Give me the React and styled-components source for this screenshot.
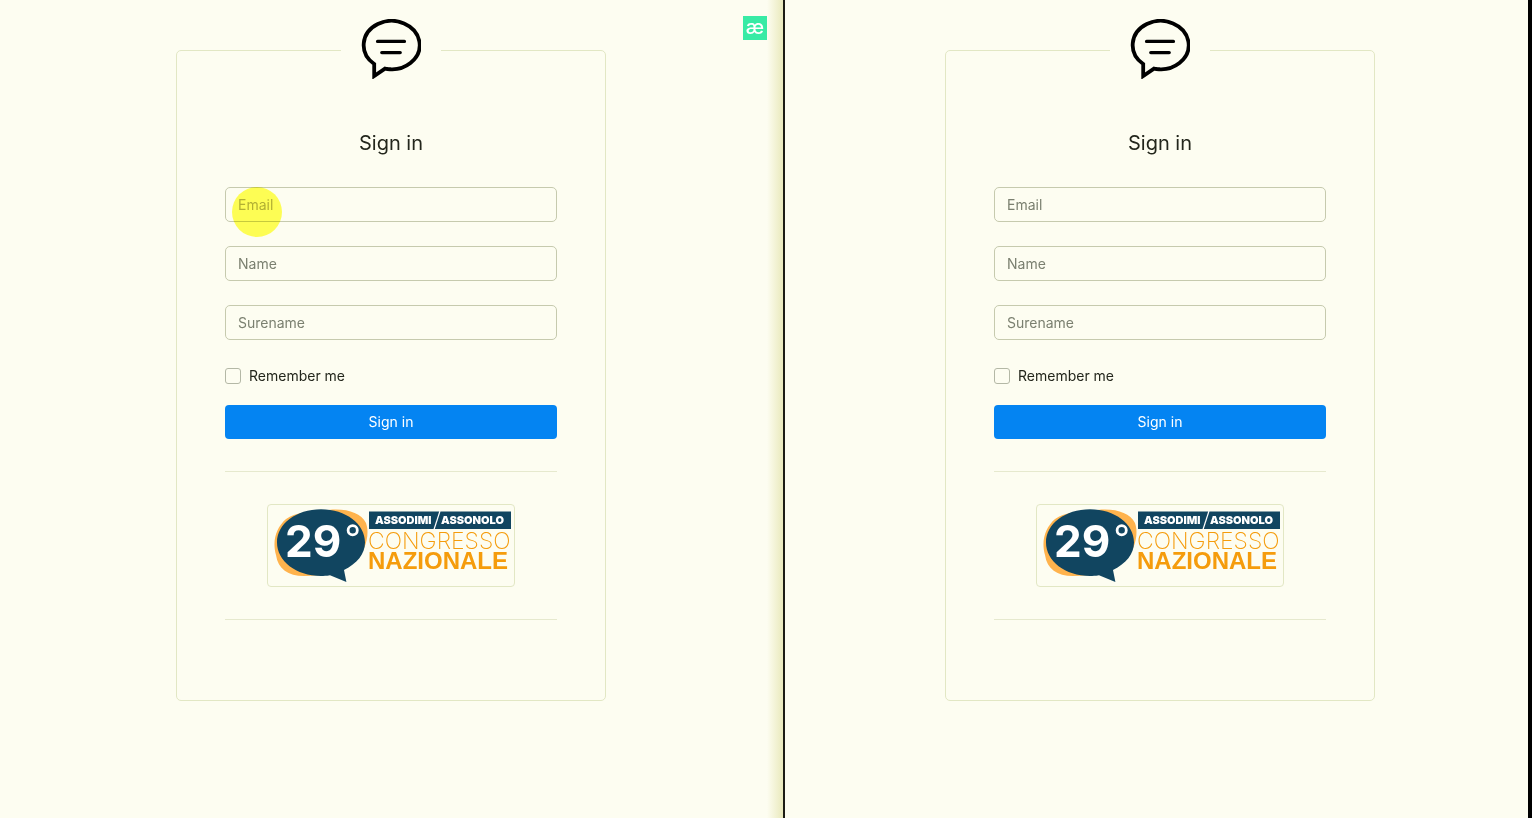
import React, { useId } from "react";
import styled, { createGlobalStyle } from "styled-components";

const colors = {
  page: "#fdfdf1",
  text: "#23261c",
  muted: "#7b8070",
  faded: "#b2b090",
  card: "#e2e7c4",
  field: "#c6caae",
  primary: "#0484f2",
  navy: "#114560",
  orange: "#f59c0c",
};

const GlobalStyle = createGlobalStyle`
  *, *::before, *::after { box-sizing: border-box; }
  body {
    margin: 0;
    background: ${colors.page};
    color: ${colors.text};
    font-family: Inter, "Liberation Sans", sans-serif;
    font-size: 14px;
    line-height: 20px;
  }
`;

const Split = styled.div`
  display: grid;
  grid-template-columns: 783fr 745fr;
  min-height: 100vh;
  border-right: 4px solid #000;
`;

const Pane = styled.main`
  position: relative;
  display: flex;
  justify-content: center;
  align-items: flex-start;
  padding: 50px 0 48px;
  ${({ $side }) =>
    $side === "left"
      ? "background: linear-gradient(to left, #e9e9bc, rgba(253, 253, 241, 0) 16px); padding-right: 1px;"
      : "border-left: 2px solid #1c1c14; padding-left: 7px;"}
`;

const Badge = styled.span`
  position: absolute;
  top: 16px;
  right: 16px;
  width: 24px;
  height: 24px;
  background: #38eba5;
  color: #fff;
  font-size: 20px;
  line-height: 22px;
  font-weight: 500;
  text-align: center;
`;

const Card = styled.form`
  display: flex;
  flex-direction: column;
  width: 100%;
  max-width: 430px;
  padding: 0 48px 80px;
  border: 1px solid ${colors.card};
  border-radius: 5px;
`;

const Brand = styled.div`
  align-self: center;
  display: flex;
  justify-content: center;
  width: 100px;
  height: 60px;
  margin-top: -32px;
  background: ${colors.page};
`;

const Title = styled.h1`
  margin: 52px 0 32px;
  font-size: 20px;
  line-height: 24px;
  font-weight: 400;
  text-align: center;
`;

const Field = styled.div`
  position: relative;
  margin-bottom: 24px;
`;

const TextInput = styled.input`
  display: block;
  width: 100%;
  height: 35px;
  padding: 0 12px;
  border: 1px solid ${colors.field};
  border-radius: 5px;
  background: transparent;
  color: ${colors.text};
  font: inherit;
  &::placeholder {
    color: ${({ $faded }) => ($faded ? colors.faded : colors.muted)};
    opacity: 1;
  }
`;

const Pointer = styled.span`
  position: absolute;
  top: 0;
  left: 7px;
  width: 50px;
  height: 50px;
  border-radius: 50%;
  background: rgba(255, 255, 60, 0.85);
  mix-blend-mode: multiply;
  pointer-events: none;
`;

const Remember = styled.div`
  display: flex;
  align-items: center;
  gap: 8px;
  height: 24px;
  margin-bottom: 17px;
`;

const Checkbox = styled.input`
  appearance: none;
  width: 16px;
  height: 16px;
  margin: 0;
  border: 1px solid #b4b8a6;
  border-radius: 3px;
  background: transparent;
  &:checked { background: ${colors.primary}; }
`;

const Submit = styled.button`
  height: 34px;
  border: 0;
  border-radius: 4px;
  background: ${colors.primary};
  color: #fff;
  font: inherit;
  cursor: pointer;
`;

const Rule = styled.hr`
  width: 100%;
  margin: 32px 0;
  border: 0;
  border-top: 1px solid #e6e9ce;
  ${({ $last }) => $last && "margin-bottom: 0;"}
`;

const Sponsor = styled.div`
  align-self: center;
  width: 248px;
  height: 83px;
  border: 1px solid ${colors.card};
  border-radius: 4px;
`;

function ChatIcon() {
  return (
    <svg width="60" height="60" viewBox="0 0 60 60" fill="none" stroke="#000" aria-hidden="true">
      <path d="M24 49.6A28 24.2 0 1 0 13.2 45V57Q19 53 24 49.6Q27 50.4 30 50.2" strokeWidth="3.8" />
      <path d="M16.6 22.4H43.4M20.8 33.6H39.2" strokeWidth="3.4" strokeLinecap="round" />
    </svg>
  );
}

function CongressLogo() {
  return (
    <svg width="246" height="81" viewBox="0 1 246 81" role="img" aria-label="29° Congresso Nazionale" fontFamily="Inter, sans-serif">
      <path d="M53 7C74 3 92 7 98 19C102 30 98 48 86 58C74 69 56 72 36 72C20 72 10 65 8 51C4 37 8 24 18 15C28 8 40 8 53 7Z" fill="#ffb34d" />
      <path d="M53 5.3C78 5.3 97 20 97 38.5C97 50 89 59.5 76 66L78.4 78L62 71.3C58 72 56 72 53 72C28 72 9 57 9 38.5C9 20 28 5.3 53 5.3Z" fill={colors.navy} />
      <text x="17" y="53" fontSize="44" fontWeight="700" fill="#fff">29</text>
      <circle cx="84.7" cy="26.3" r="4.6" fill="none" stroke="#fff" strokeWidth="2.8" />
      <rect x="101" y="7.5" width="142" height="17.5" fill={colors.navy} />
      <path d="M172 7L166 25.5" stroke="#fff" strokeWidth="1.2" />
      <text x="107" y="20" fontSize="11" fontWeight="900" fill="#fff">ASSODIMI</text>
      <text x="173" y="20" fontSize="11" fontWeight="900" fill="#fff">ASSONOLO</text>
      <text x="100" y="45" fontSize="23" fontWeight="200" fill={colors.orange}>CONGRESSO</text>
      <text x="100" y="65" fontSize="24" fontWeight="700" fontFamily="Liberation Sans, sans-serif" fill={colors.orange}>NAZIONALE</text>
    </svg>
  );
}

function SignIn({ pointer }) {
  const rememberId = useId();
  return (
    <Card onSubmit={(e) => e.preventDefault()}>
      <Brand><ChatIcon /></Brand>
      <Title>Sign in</Title>
      <Field>
        <TextInput type="email" placeholder="Email" aria-label="Email" $faded={pointer} />
        {pointer && <Pointer />}
      </Field>
      <Field><TextInput type="text" placeholder="Name" aria-label="Name" /></Field>
      <Field><TextInput type="text" placeholder="Surename" aria-label="Surename" /></Field>
      <Remember>
        <Checkbox type="checkbox" id={rememberId} />
        <label htmlFor={rememberId}>Remember me</label>
      </Remember>
      <Submit type="submit">Sign in</Submit>
      <Rule />
      <Sponsor><CongressLogo /></Sponsor>
      <Rule $last />
    </Card>
  );
}

export default function App() {
  return (
    <>
      <GlobalStyle />
      <Split>
        <Pane $side="left">
          <SignIn pointer />
          <Badge>æ</Badge>
        </Pane>
        <Pane as="section" $side="right">
          <SignIn />
        </Pane>
      </Split>
    </>
  );
}
